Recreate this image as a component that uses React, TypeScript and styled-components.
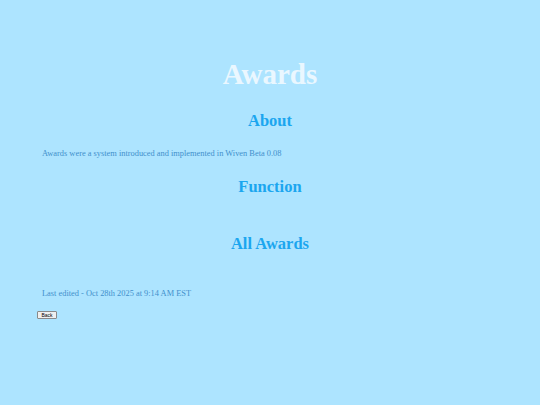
import React from 'react';
import styled, { createGlobalStyle } from 'styled-components';

const GlobalStyle = createGlobalStyle`
  html, body {
    margin: 0;
    padding: 0;
    background: #ade4ff;
  }
  body {
    font-family: 'Liberation Serif', 'Times New Roman', serif;
  }
`;

const Page = styled.main`
  min-height: 405px;
  box-sizing: border-box;
  padding: 57px 37px 0;
  display: flex;
  flex-direction: column;
`;

const Title = styled.h1`
  margin: 0;
  font-size: 29px;
  line-height: 34px;
  font-weight: 700;
  text-align: center;
  color: #eaf7ff;
`;

const Heading = styled.h2<{ $gap: number }>`
  margin: ${(p) => p.$gap}px 0 0;
  font-size: 16.5px;
  line-height: 20px;
  font-weight: 700;
  text-align: center;
  color: #1ba6ef;
`;

const Text = styled.p<{ $gap: number }>`
  margin: ${(p) => p.$gap}px 0 0 5px;
  font-size: 8.4px;
  line-height: 11px;
  color: #4290cc;
`;

const BackButton = styled.button`
  align-self: flex-start;
  margin-top: 12px;
  width: 20px;
  height: 8px;
  padding: 0;
  box-sizing: border-box;
  font-family: 'Liberation Sans', Arial, sans-serif;
  font-size: 5px;
  line-height: 6px;
  color: #000;
  background: #efefef;
  border: 1px solid #8a8a8a;
  border-radius: 1px;
`;

export default function App() {
  return (
    <>
      <GlobalStyle />
      <Page>
        <Title>Awards</Title>
        <Heading $gap={19.5}>About</Heading>
        <Text $gap={17}>Awards were a system introduced and implemented in Wiven Beta 0.08</Text>
        <Heading $gap={18}>Function</Heading>
        <Heading $gap={37}>All Awards</Heading>
        <Text $gap={34.5}>Last edited - Oct 28th 2025 at 9:14 AM EST</Text>
        <BackButton onClick={() => window.history.back()}>Back</BackButton>
      </Page>
    </>
  );
}
